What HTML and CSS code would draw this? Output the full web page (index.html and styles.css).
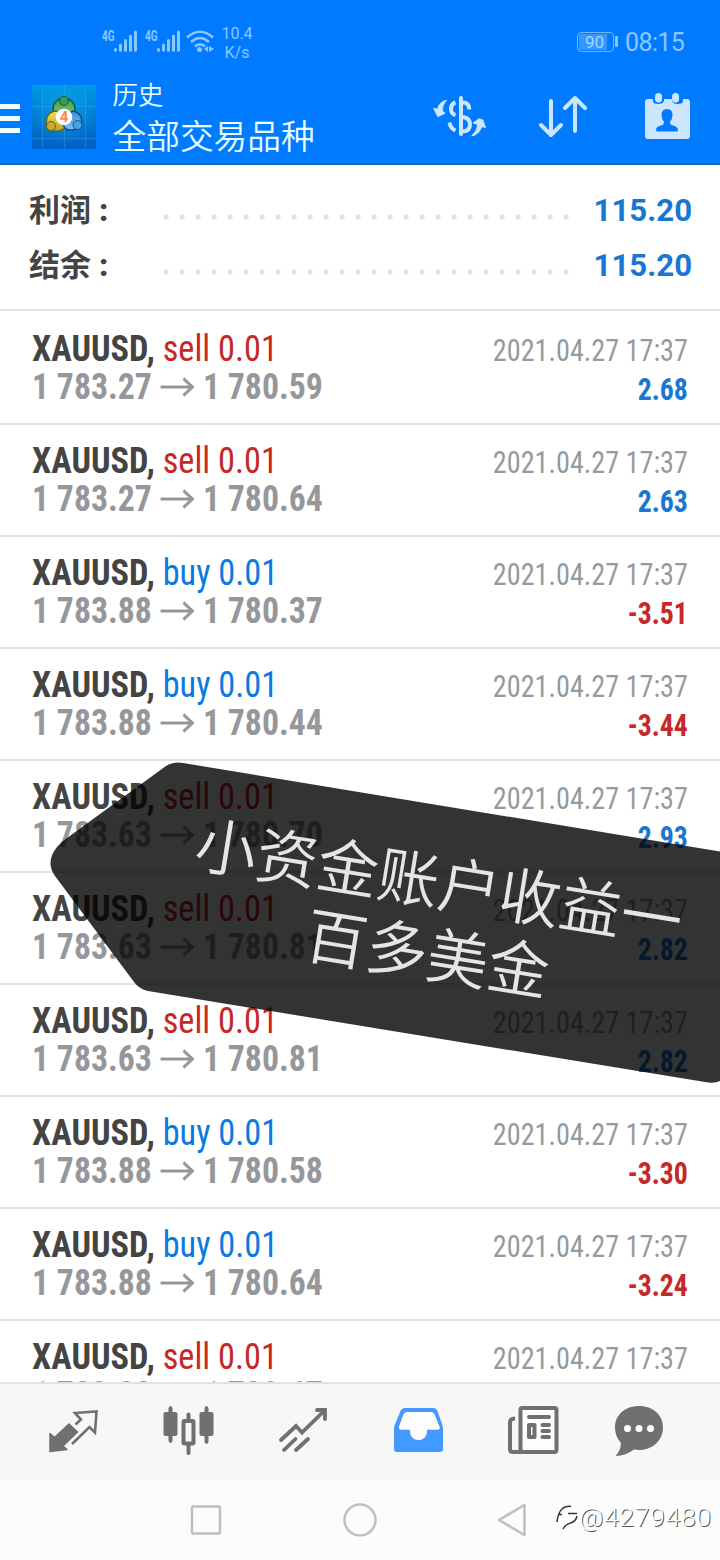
FILE: index.html
```html
<!DOCTYPE html>
<html lang="zh-CN">
<head>
<meta charset="utf-8">
<title>历史</title>
<link rel="stylesheet" href="styles.css">
</head>
<body>
<div class="screen">
  <header class="top">
    <div class="status">
      <svg class="signals" width="114" height="30" viewBox="0 0 114 30">
        <g fill="#8cc8ff">
          <text class="net" x="0" y="11.500" textLength="12.500" lengthAdjust="spacingAndGlyphs">4G</text>
          <text class="net" x="43" y="11.500" textLength="12.500" lengthAdjust="spacingAndGlyphs">4G</text>
        </g>
        <g stroke="#8cc8ff" stroke-width="3" stroke-linecap="round">
          <path d="M13.500 20.500v.8M18.500 16v5.300M23.500 11.500v9.800M28.500 7v14.300M33.500 3v18.300"/>
          <path d="M56.500 20.500v.8M61.500 16v5.300M66.500 11.500v9.800M71.500 7v14.300M76.500 3v18.300"/>
        </g>
        <g fill="none" stroke="#8cc8ff" stroke-width="2.500">
          <path d="M85 8.500Q98-3 111 8.500M89 13Q98 5 107 13M93 17.500Q98 13 103 17.500"/>
        </g>
        <circle cx="97.500" cy="20.500" r="2.500" fill="#8cc8ff"/>
        <path d="M102 20l4-3v6zM107 17l5 3-5 3z" fill="#8cc8ff"/>
      </svg>
      <div class="speed">10.4<br>K/s</div>
      <div class="battery"><span class="level">90</span></div>
      <div class="clock">08:15</div>
    </div>
    <div class="appbar">
      <div class="menu"><i></i><i></i><i></i></div>
      <svg class="logo" width="64" height="64" viewBox="0 0 64 64">
        <defs>
          <linearGradient id="bg" x2="0" y2="1"><stop stop-color="#0099e2"/><stop offset="1" stop-color="#0060c4"/></linearGradient>
          <radialGradient id="glow"><stop stop-color="#18bdf5"/><stop offset="1" stop-color="#18bdf5" stop-opacity="0"/></radialGradient>
          <linearGradient id="gr" x2="0" y2="1"><stop stop-color="#3f9a50"/><stop offset="1" stop-color="#8fd070"/></linearGradient>
          <linearGradient id="ye" x2="0" y2="1"><stop stop-color="#f0e05c"/><stop offset="1" stop-color="#b7a022"/></linearGradient>
          <linearGradient id="bl" x2="0" y2="1"><stop stop-color="#3a8fd6"/><stop offset="1" stop-color="#7cc4f4"/></linearGradient>
        </defs>
        <rect width="64" height="64" fill="url(#bg)"/>
        <circle cx="32" cy="28" r="32" fill="url(#glow)" opacity=".4"/>
        <path d="M10.500 0v64M32.500 0v64M53.500 0v64M0 21.500h64M0 53.500h64" stroke="#5cc4f5" stroke-opacity=".25"/>
        <circle cx="32" cy="24" r="11" fill="url(#gr)" stroke="#155c50" stroke-width="1.500"/>
        <path d="M15 44q-3-16 8-18 12 2 11 14-3 10-19 4z" fill="url(#ye)" stroke="#5d6a28" stroke-width="1.500"/>
        <path d="M49 43q3-15-8-17-10 4-10 12 1 11 18 5z" fill="url(#bl)" stroke="#124c86" stroke-width="1.500"/>
        <circle cx="32" cy="16" r="4.500" fill="#3c9a54" stroke="#17593c"/>
        <circle cx="19" cy="41" r="4.500" fill="#c9aa27" stroke="#6a6324"/>
        <circle cx="45.500" cy="40" r="4.500" fill="#4b9ee0" stroke="#17528c"/>
        <circle cx="32" cy="32" r="8.300" fill="#fff"/>
        <text class="four" x="32" y="37" text-anchor="middle">4</text>
      </svg>
      <div class="titles"><div class="t1">历史</div><div class="t2">全部交易品种</div></div>
      <svg class="actions" width="262" height="54" viewBox="0 0 262 54">
        <path d="M30 9v36" stroke="#cce6ff" stroke-width="4" stroke-linecap="round"/>
        <path d="M24.500 13.500Q20 15 20 20t4.500 6M32 13.500q6 0 6.500 7M32 28q7 1 7 7.500t-7 7M18.500 33.500q1 6 6 8" fill="none" stroke="#cce6ff" stroke-width="4"/>
        <path d="M15.800 11Q8 13 6.500 20l-4-.7 4.300 8.400 7.400-3.400-2.700-2.300q-.5-6 4.300-11zM40.800 46.500q5-4 5.700-11L42 34l6-4.300 4 1.300 2.500 7.500-3.700-.8q-2 6-7.500 8.800z" fill="#cce6ff" stroke="#cce6ff" stroke-width=".8" stroke-linejoin="round"/>
        <g fill="none" stroke="#cce6ff" stroke-width="4" stroke-linecap="round" stroke-linejoin="round">
          <path d="M120 12v34M110 36l10 10 10-10M144 42V9M134 19l10-10 10 10"/>
        </g>
        <path d="M217 10h5v2q0 3 5 3t6-3v-2h8v2q1 3 6 3t5-3v-2h4q3 0 3 3v34q0 3-3 3h-39q-3 0-3-3V13q0-3 3-3z" fill="#cce6ff"/>
        <rect x="224" y="4" width="7" height="9.500" rx="3.500" fill="#cce6ff"/>
        <rect x="241" y="4" width="7" height="9.500" rx="3.500" fill="#cce6ff"/>
        <path d="M236 20q5.500 0 5.500 6 0 4-2.500 7 0 3 3 3.500 5 1 5 4.500 0 1.500-1.500 1.500h-19Q225 42.500 225 41q0-3.500 5-4.500 3-.5 3-3.500-2.500-3-2.500-7 0-6 5.500-6z" fill="#007aff"/>
      </svg>
    </div>
  </header>

  <section class="summary">
    <div class="sum"><span class="label">利润<b>:</b></span><span class="dots"></span><span class="total">115.20</span></div>
    <div class="sum"><span class="label">结余<b>:</b></span><span class="dots"></span><span class="total">115.20</span></div>
  </section>

  <main class="deals" id="deals"></main>

  <nav class="tabs">
    <svg width="720" height="96" viewBox="0 0 720 96">
      <path d="M50 49.500l4.500 4L69 40l8.500 8L63 62l4 3.500L50 67.500z" fill="#707070" stroke="#707070" stroke-width="1.500" stroke-linejoin="round"/>
      <path d="M75.500 40.500l5.500-5-6-6.500 21.500-1.500L95 48.500 89.500 43 72 60" fill="none" stroke="#707070" stroke-width="2.600"/>
      <path d="M168.500 24q2-4 4 0v4h3q2 0 2 2v20q0 2-2 2h-3v5q-2 4-4 0v-5h-3q-2 0-2-2V30q0-2 2-2h3zM204.500 24q2-4 4 0v4h3q2 0 2 2v20q0 2-2 2h-3v6q-2 4-4 0v-6h-3q-2 0-2-2V30q0-2 2-2h3z" fill="#707070"/>
      <g fill="none" stroke="#707070" stroke-width="4">
        <rect x="183.500" y="37" width="10" height="22.500" rx="1"/>
        <path d="M188.500 36v-5.500M188.500 61v8" stroke-linecap="round"/>
      </g>
      <path d="M281 56l15-14 6 6.500L324 27M317 26h8v9M284 66l11.500-11M296 66l12-11" fill="none" stroke="#707070" stroke-width="3.800" stroke-linecap="round"/>
      <path fill-rule="evenodd" d="M405 24h28q3 0 4.500 3l5 14.500q.5 1.500.5 3V65q0 3-3 3h-43q-3 0-3-3V44.500q0-1.500.5-3l6-14.500q1.500-3 4.500-3zM407 28h24q2.500 0 3.500 2.500l5 12.500q.7 2.500-2 2.500H427q0 10.500-8.500 10.500T410 45.500h-9q-2.500 0-2-2.500l4.500-12.500q1-2.500 3.500-2.500z" fill="#429aff"/>
      <path d="M407 28h24q2.500 0 3.500 2.500l5 12.500q.7 2.500-2 2.500H427q0 10.500-8.500 10.500T410 45.500h-9q-2.500 0-2-2.500l4.500-12.500q1-2.500 3.500-2.500z" fill="#fdfdfd"/>
      <rect x="519" y="23" width="38" height="46" fill="#fdfdfd"/>
      <g fill="none" stroke="#707070" stroke-width="4" stroke-linecap="round" stroke-linejoin="round">
        <rect x="520.500" y="24" width="36" height="44" rx="2"/>
        <path d="M515 34.500q-5 0-5 4v26.500q0 3 3 3h8" stroke-linecap="butt"/>
        <path d="M529 33h20M542.500 41h6.500M542.500 47h6.500M542.500 53h6.500"/>
        <rect x="529" y="41" width="5.500" height="12"/>
      </g>
      <path d="M639 22c14 0 24 9 24 21.500S653 66 639 66l-5-.5Q626 71.500 615.500 72q5-5 5.500-13-6-6.500-6-15.500C615 31 625 22 639 22z" fill="#707070"/>
      <g fill="#fff"><circle cx="627.500" cy="44.500" r="3.500"/><circle cx="639" cy="44.500" r="3.500"/><circle cx="650.500" cy="44.500" r="3.500"/></g>
    </svg>
  </nav>
  <footer class="sys">
    <svg width="720" height="80" viewBox="0 0 720 80">
      <g fill="none" stroke="#bfbfbf" stroke-width="2.500" stroke-linejoin="round">
        <rect x="192" y="26.500" width="28" height="27" rx="1.500"/><circle cx="360" cy="40" r="15.500"/><path d="M499 40l25.500-15v30z"/>
      </g>
    </svg>
  </footer>

  <div class="mark">
    <svg width="26" height="30" viewBox="0 0 26 30">
      <circle cx="12" cy="14" r="11" fill="#fff"/>
      <path d="M3 12.500h4M2 20q1-10 6-14 4-2.500 8-1.500M13 11.500h9M22 14q-1 5-6 7-5 .5-8 6" fill="none" stroke="#333" stroke-width="1.500"/>
    </svg>
    <span>@4279480</span>
  </div>

  <div class="banner">
    <svg width="670" height="324" viewBox="50 761 670 324">
      <path d="M166 766Q174 761 183 763L720 851.500V1081Q714 1084 705 1082L148 991Q139 989 134 982L55 876Q45 862 57 847Q61 842 67 838z" fill="#000" fill-opacity=".8"/>
    </svg>
    <div class="caption">小资金账户收益一<br>百多美金</div>
  </div>
</div>
<script src="app.js"></script>
</body>
</html>
```
FILE: styles.css
```css
*{box-sizing:border-box}
body{margin:0;background:#fff;font-family:Roboto,"Noto Sans CJK SC",sans-serif}
.screen{position:relative;width:720px;height:1560px;overflow:hidden;display:flex;flex-direction:column}
svg{display:block;flex:none}
.top{height:165px;background:#007aff;border-bottom:2px solid #1a68b8;flex:none}
.status{height:72px;display:flex;align-items:flex-start;padding:24px 35px 0 102px;color:#8cc8ff}
.signals{margin-top:5px}
.net{font-size:14px;font-weight:700}
.speed{font-size:16px;line-height:19px;text-align:center;margin-left:5px;width:32px}
.battery{margin:8px 0 0 auto;width:37px;height:20px;border:1.500px solid #6fb8ff;border-radius:4px;padding:1px;position:relative}
.battery::after{content:"";position:absolute;right:-5px;top:3px;width:3px;height:11px;background:#8cc8ff;border-radius:1px}
.level{display:block;width:28px;height:16px;line-height:17px;font-size:17px;background:#3597ff;padding-left:6px;color:#a8d8ff}
.clock{font-size:25px;line-height:30px;margin:4px 0 0 11px;width:60px;letter-spacing:-.6px}
.appbar{display:flex;height:91px}
.menu{display:flex;flex-direction:column;gap:7px;padding-top:32px;width:32px}
.menu i{width:20px;height:5px;background:#eaffff}
.logo{margin-top:13px}
.four{font-size:15px;font-weight:700;fill:#f08c50}
.titles{margin-left:16.500px;width:222px;color:#eaffff;font-weight:350;white-space:nowrap}
.t1{font-size:25.500px;line-height:36px;margin-top:5px}
.t2{font-size:33.700px;line-height:44px;margin-top:3px}
.actions{margin:17px 0 0 96px}
.summary{height:146px;flex:none;padding:17px 28px 0;border-bottom:2px solid #e2e2e2}
.sum{height:55px;display:flex;align-items:center}
.label{width:133px;color:#444;font-size:31px;font-weight:700;padding:0 0 5px 1px}
.label b{margin-left:8px}
.dots{width:408px;height:6px;margin-top:14px;background:radial-gradient(circle at 5px 3px,#e2e2e2 2.300px,transparent 3px) 0 0/16px 6px}
.total{margin-left:auto;font-size:32px;font-weight:700;color:#1976d2;transform:scaleX(.975);transform-origin:right}
.deals{height:1071px;flex:none;padding-top:2px;overflow:hidden}
.deal{height:112px;border-bottom:2px solid #e2e2e2;display:flex;justify-content:space-between;padding:15px 32px 0;font-stretch:75%}
.symbol{font-size:37px;line-height:42px;color:#444;font-weight:700;white-space:nowrap;transform:scaleX(.927);transform-origin:left}
.symbol span{font-weight:400}
.symbol .sell{color:#c62828}
.symbol .buy{color:#0a7ae0}
.prices{display:flex;align-items:center;font-size:37px;line-height:34px;color:#96979a;font-weight:700;white-space:nowrap;transform:scaleX(.912);transform-origin:left}
.prices svg{margin:0 9px}
.right{text-align:right}
.date{font-size:30.500px;line-height:46px;color:#98999b;transform:scaleX(.925);transform-origin:right}
.profit{font-size:30.500px;line-height:32px;font-weight:700;color:#1976d2;transform:scaleX(.91);transform-origin:right}
.profit.loss{color:#c62828}
.tabs{height:98px;flex:none;background:#f7f7f7;border-top:2px solid #e2e2e2}
.sys{height:80px;background:#fcfcfc}
.mark{position:absolute;left:555px;top:1502px;display:flex;align-items:center;font-size:26.500px;font-weight:300;line-height:30px;letter-spacing:.7px;color:#fff;text-shadow:1px 1px 0 #555}
.mark svg{margin-right:-2px}
.banner{position:absolute;left:50px;top:761px;width:670px;height:324px}
.caption{position:absolute;left:123px;top:87px;width:520px;text-align:center;font-size:61.500px;line-height:72px;font-weight:350;color:#e5e5e5;white-space:nowrap;transform:rotate(9.200deg)}
```
FILE: app.js
```js
const deals = [
  ["sell","783.27","780.59","2.68"],["sell","783.27","780.64","2.63"],
  ["buy","783.88","780.37","-3.51"],["buy","783.88","780.44","-3.44"],
  ["sell","783.63","780.70","2.93"],["sell","783.63","780.81","2.82"],
  ["sell","783.63","780.81","2.82"],["buy","783.88","780.58","-3.30"],
  ["buy","783.88","780.64","-3.24"],["sell","783.88","780.67",""]
];
const arrow = `<svg width="38" height="22" viewBox="0 0 38 22"><path d="M1 11h35M26 2.500l10 8.500-10 8.500" fill="none" stroke="#96979a" stroke-width="3"/></svg>`;
document.getElementById("deals").innerHTML = deals.map(([side, from, to, gain]) => `
  <div class="deal">
    <div><div class="symbol">XAUUSD, <span class="${side}">${side} 0.01</span></div>
    <div class="prices"><span>1 ${from}</span>${arrow}<span>1 ${to}</span></div></div>
    <div class="right"><div class="date">2021.04.27 17:37</div>
    <div class="profit ${gain[0] === "-" ? "loss" : ""}">${gain}</div></div>
  </div>`).join("");
```
